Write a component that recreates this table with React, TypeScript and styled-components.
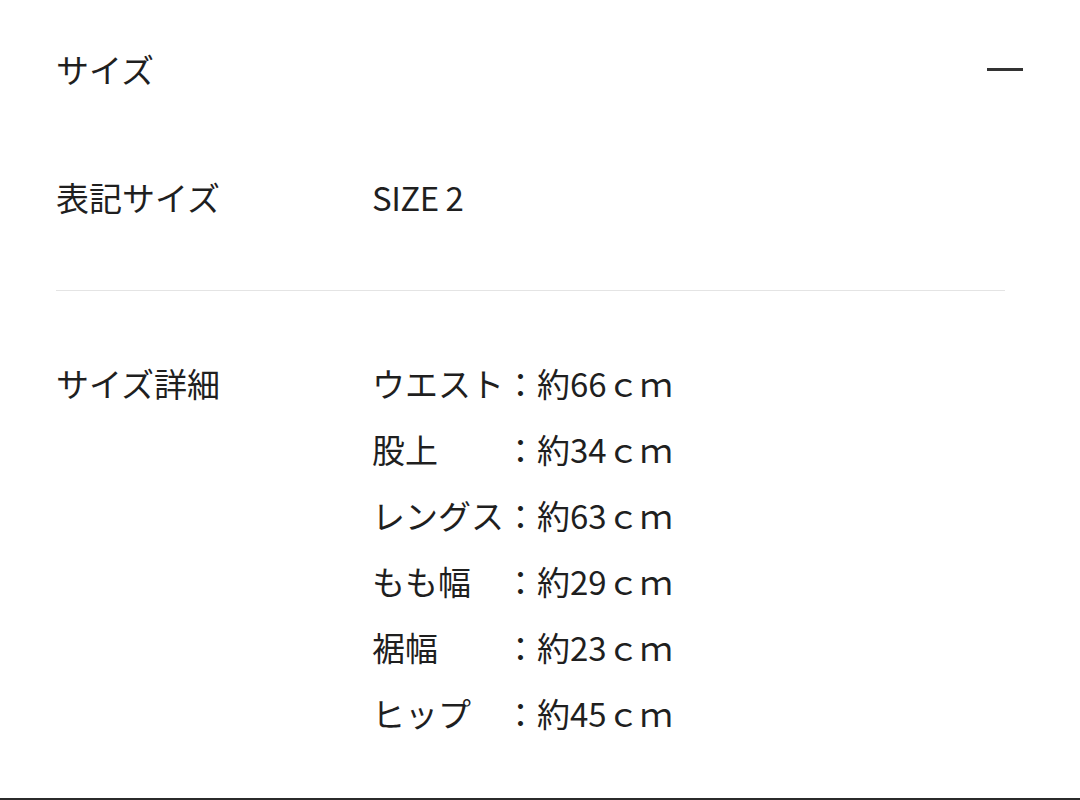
import React from 'react';
import styled, { createGlobalStyle } from 'styled-components';

const GlobalStyle = createGlobalStyle`
  html, body {
    margin: 0;
    padding: 0;
    background: #ffffff;
  }
  body {
    font-family: "Noto Sans CJK JP", "Noto Sans", sans-serif;
    color: #1f1f1f;
  }
`;

interface Measure {
  name: string;
  value: string;
}

const measures: Measure[] = [
  { name: 'ウエスト', value: '：約66ｃｍ' },
  { name: '股上', value: '：約34ｃｍ' },
  { name: 'レングス', value: '：約63ｃｍ' },
  { name: 'もも幅', value: '：約29ｃｍ' },
  { name: '裾幅', value: '：約23ｃｍ' },
  { name: 'ヒップ', value: '：約45ｃｍ' }
];

const App: React.FC = () => {
  return (
    <>
      <GlobalStyle />
      <Panel>
        <Header>
          <Title>サイズ</Title>
          <CollapseIcon aria-label="閉じる" />
        </Header>

        <Row $top={26} $bottom={60}>
          <Label>表記サイズ</Label>
          <Value>SIZE 2</Value>
        </Row>

        <Divider />

        <Row $top={59} $bottom={0}>
          <Label>サイズ詳細</Label>
          <MeasureList>
            {measures.map((m) => (
              <React.Fragment key={m.name}>
                <MeasureName>{m.name}</MeasureName>
                <MeasureValue>{m.value}</MeasureValue>
              </React.Fragment>
            ))}
          </MeasureList>
        </Row>
      </Panel>
    </>
  );
};

const Panel = styled.section`
  box-sizing: border-box;
  height: 800px;
  padding: 0 57px 0 56px;
  border-bottom: 2px solid #2b2b2b;
  font-size: 33px;
`;

const Header = styled.div`
  display: flex;
  align-items: center;
  justify-content: space-between;
  height: 138px;
`;

const Title = styled.h2`
  margin: 0;
  font-size: 33px;
  font-weight: 400;
  line-height: 1;
`;

const CollapseIcon = styled.span`
  display: block;
  width: 36px;
  height: 3px;
  background: #333333;
`;

const Row = styled.div<{ $top: number; $bottom: number }>`
  display: grid;
  grid-template-columns: 316px 1fr;
  padding: ${(p) => p.$top}px 0 ${(p) => p.$bottom}px;
  line-height: 66px;
`;

const Label = styled.div`
  font-weight: 400;
`;

const Value = styled.div`
  letter-spacing: -0.5px;
`;

const Divider = styled.hr`
  margin: 0 18px 0 0;
  border: none;
  border-top: 1px solid #e4e4e4;
`;

const MeasureList = styled.div`
  display: grid;
  grid-template-columns: 4em auto;
  justify-content: start;
`;

const MeasureName = styled.span`
  white-space: nowrap;
`;

const MeasureValue = styled.span`
  white-space: nowrap;
`;

export default App;
